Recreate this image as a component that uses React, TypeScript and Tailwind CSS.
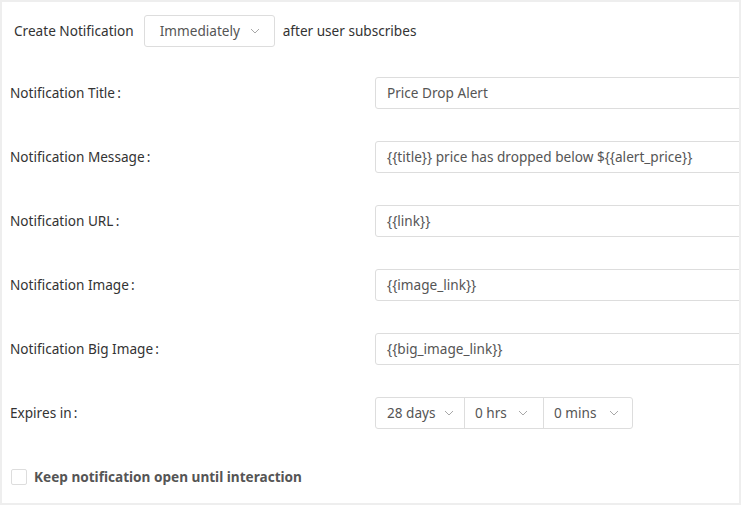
import React from "react";

const Chevron = () => (
  <svg width="10" height="6" viewBox="0 0 10 6" className="shrink-0">
    <polyline points="1,1 5,5 9,1" fill="none" stroke="#a8a8a8" strokeWidth="1" />
  </svg>
);

const rows: [string, string][] = [
  ["Notification Title", "Price Drop Alert"],
  ["Notification Message", "{{title}} price has dropped below ${{alert_price}}"],
  ["Notification URL", "{{link}}"],
  ["Notification Image", "{{image_link}}"],
  ["Notification Big Image", "{{big_image_link}}"],
];

export default function App() {
  return (
    <div
      className="h-[505px] w-[741px] bg-[#eeeeee] p-[2px] text-[13.6px] text-[#333333]"
      style={{ fontFamily: "'Noto Sans', sans-serif" }}
    >
      <div className="h-full w-full overflow-hidden bg-white">
        <div className="mt-[13px] flex h-[32px] items-center pl-[12px]">
          <span>Create Notification</span>
          <div className="ml-[10px] flex h-[32px] w-[131px] items-center rounded-[3px] border border-[#dddddd] pl-[15px] text-[#555555]">
            <span>Immediately</span>
            <span className="ml-[10px]"><Chevron /></span>
          </div>
          <span className="ml-[8px]">after user subscribes</span>
        </div>
        <div className="mt-[14px] flex flex-col pl-[8px]">
          {rows.map(([label, value]) => (
            <div key={label} className="flex h-[64px] items-center">
              <div className="w-[365px] shrink-0">{label}&#8201;:</div>
              <div className="flex h-[32px] w-[420px] shrink-0 items-center rounded-[3px] border border-[#dddddd] px-[11px] text-[#555555]">
                {value}
              </div>
            </div>
          ))}
          <div className="flex h-[64px] items-center">
            <div className="w-[365px] shrink-0">Expires in&#8201;:</div>
            <div className="flex h-[32px] rounded-[3px] border border-[#dddddd] text-[#555555]">
              <div className="flex w-[89px] items-center border-r border-[#dddddd] pl-[11px]">
                <span>28 days</span>
                <span className="ml-[8px]"><Chevron /></span>
              </div>
              <div className="flex w-[79px] items-center justify-between border-r border-[#dddddd] pl-[10px] pr-[15px]">
                <span>0 hrs</span>
                <Chevron />
              </div>
              <div className="flex w-[88px] items-center justify-between pl-[10px] pr-[13px]">
                <span>0 mins</span>
                <Chevron />
              </div>
            </div>
          </div>
          <div className="flex h-[64px] items-center">
            <div className="ml-[1px] h-[16px] w-[16px] rounded-[2px] border border-[#dddddd]" />
            <span className="ml-[7px] font-bold text-[#555555]">Keep notification open until interaction</span>
          </div>
        </div>
      </div>
    </div>
  );
}
